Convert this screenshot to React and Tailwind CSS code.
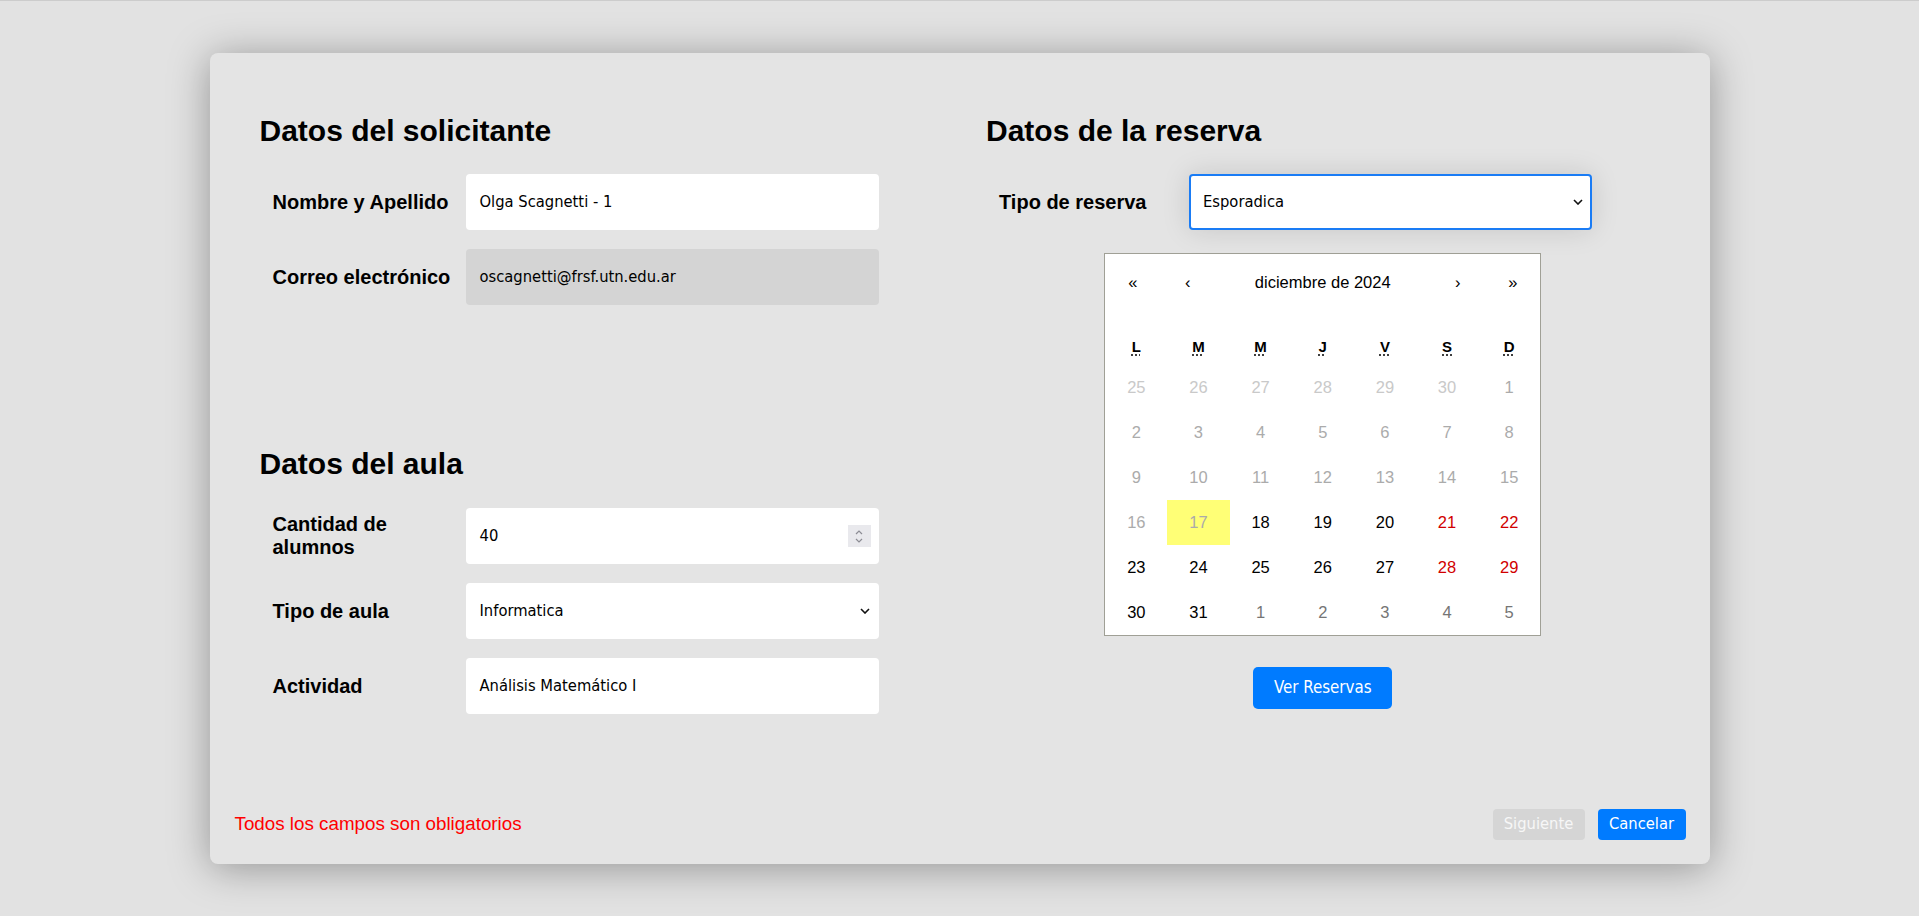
import React from "react";

const arial = "font-['Liberation_Sans',Arial,sans-serif]";
const tah = "font-['DejaVu_Sans_Condensed','DejaVu_Sans',sans-serif] font-stretch-condensed";

const colors = {
  prev: "text-[#c9c9c9]",
  past: "text-[#ababab]",
  today: "text-[#ababab] bg-[#ffff76]",
  cur: "text-black",
  wkd: "text-[#d10000]",
  next: "text-[#757575]",
};

const weeks = [
  [[25, "prev"], [26, "prev"], [27, "prev"], [28, "prev"], [29, "prev"], [30, "prev"], [1, "past"]],
  [[2, "past"], [3, "past"], [4, "past"], [5, "past"], [6, "past"], [7, "past"], [8, "past"]],
  [[9, "past"], [10, "past"], [11, "past"], [12, "past"], [13, "past"], [14, "past"], [15, "past"]],
  [[16, "past"], [17, "today"], [18, "cur"], [19, "cur"], [20, "cur"], [21, "wkd"], [22, "wkd"]],
  [[23, "cur"], [24, "cur"], [25, "cur"], [26, "cur"], [27, "cur"], [28, "wkd"], [29, "wkd"]],
  [[30, "cur"], [31, "cur"], [1, "next"], [2, "next"], [3, "next"], [4, "next"], [5, "next"]],
];

function Chevron() {
  return (
    <svg width="10" height="6" viewBox="0 0 10 6" fill="none">
      <path d="M1 1l4 4 4-4" stroke="#111" strokeWidth="1.6" />
    </svg>
  );
}

function Label({ children, w = "w-[193px]" }) {
  return (
    <div className={`${w} ml-[13px] shrink-0 text-[20px] leading-[23px] font-bold text-black pr-2`}>
      {children}
    </div>
  );
}

function Field({ label, children, lw }) {
  return (
    <div className="flex items-center">
      <Label w={lw}>{label}</Label>
      {children}
    </div>
  );
}

function TextBox({ value, disabled }) {
  return (
    <div
      className={`w-[413px] h-[56px] rounded-[4px] flex items-center pl-[14px] ${tah} text-[16.4px] text-black ${
        disabled ? "bg-[#d4d4d4]" : "bg-white"
      }`}
    >
      {value}
    </div>
  );
}

function Calendar() {
  return (
    <div className={`w-[437px] mx-auto mt-[23px] bg-white border border-[#a0a096] ${arial}`}>
      <div className="h-[56px] flex items-center text-[16.5px] text-black mb-[20px]">
        <button className="w-[55px] h-full text-center">«</button>
        <button className="w-[55px] h-full text-center">‹</button>
        <span className="flex-1 text-center">diciembre de 2024</span>
        <button className="w-[55px] h-full text-center">›</button>
        <button className="w-[55px] h-full text-center">»</button>
      </div>
      <div className="grid grid-cols-7 h-[35px] items-center text-[15px] font-bold text-black text-center">
        {["L", "M", "M", "J", "V", "S", "D"].map((d, i) => (
          <abbr key={i} className="underline decoration-dotted underline-offset-2">
            {d}
          </abbr>
        ))}
      </div>
      {weeks.map((w, i) => (
        <div key={i} className="grid grid-cols-7">
          {w.map(([n, t], j) => (
            <div key={j} className={`h-[45px] flex items-center justify-center text-[16.5px] ${colors[t]}`}>
              {n}
            </div>
          ))}
        </div>
      ))}
    </div>
  );
}

export default function App() {
  return (
    <div className={`min-h-screen w-full bg-[#e2e2e2] border-t border-[#cccccc] pt-[52px] ${arial}`}>
      <div className="mx-auto w-[1500px] h-[811px] bg-[#e4e4e4] rounded-[8px] shadow-[0_4px_40px_rgba(0,0,0,0.35)] flex flex-col">
        <div className="px-[50px] pt-[61px] grid grid-cols-2 gap-[53px]">
          {/* izquierda */}
          <div>
            <h2 className="text-[30px] leading-[34px] font-bold text-black">Datos del solicitante</h2>
            <div className="mt-[26px] flex flex-col gap-[19px]">
              <Field label="Nombre y Apellido">
                <TextBox value="Olga Scagnetti - 1" />
              </Field>
              <Field label="Correo electrónico">
                <TextBox value="oscagnetti@frsf.utn.edu.ar" disabled />
              </Field>
            </div>

            <h2 className="mt-[142px] text-[30px] leading-[34px] font-bold text-black">Datos del aula</h2>
            <div className="mt-[27px] flex flex-col gap-[19px]">
              <Field label="Cantidad de alumnos">
                <div className={`w-[413px] h-[56px] rounded-[4px] bg-white flex items-center pl-[14px] pr-[8px] ${tah} text-[16.4px] text-black`}>
                  <span className="flex-1">40</span>
                  <div className="w-[23px] h-[22px] bg-[#e9e9ed] flex flex-col items-center justify-center gap-[3px]">
                    <svg width="8" height="5" viewBox="0 0 8 5" fill="none">
                      <path d="M1 4l3-3 3 3" stroke="#8c8c94" strokeWidth="1.2" />
                    </svg>
                    <svg width="8" height="5" viewBox="0 0 8 5" fill="none">
                      <path d="M1 1l3 3 3-3" stroke="#8c8c94" strokeWidth="1.2" />
                    </svg>
                  </div>
                </div>
              </Field>
              <Field label="Tipo de aula">
                <div className={`w-[413px] h-[56px] rounded-[4px] bg-white flex items-center pl-[14px] pr-[9px] ${tah} text-[16.4px] text-black`}>
                  <span className="flex-1">Informatica</span>
                  <Chevron />
                </div>
              </Field>
              <Field label="Actividad">
                <TextBox value="Análisis Matemático I" />
              </Field>
            </div>
          </div>

          {/* derecha */}
          <div>
            <h2 className="text-[30px] leading-[34px] font-bold text-black">Datos de la reserva</h2>
            <div className="mt-[26px]">
              <Field label="Tipo de reserva" lw="w-[190px]">
                <div className={`w-[403px] h-[56px] rounded-[4px] bg-white border-2 border-[#1a7cf5] shadow-[0_0_28px_rgba(0,0,0,0.13)] flex items-center pl-[12px] pr-[7px] ${tah} text-[16.4px] text-black`}>
                  <span className="flex-1">Esporadica</span>
                  <Chevron />
                </div>
              </Field>
            </div>
            <Calendar />
            <div className="flex justify-center mt-[31px]">
              <button className={`w-[139px] h-[42px] rounded-[5px] bg-[#007bff] text-white text-[16.8px] ${tah}`}>
                Ver Reservas
              </button>
            </div>
          </div>
        </div>

        <div className="mt-auto flex items-center pl-[25px] pr-[24px] pb-[24px]">
          <span className="flex-1 text-[18.8px] text-[#ff0000]">Todos los campos son obligatorios</span>
          <div className={`flex gap-[13px] ${tah} text-[16.4px]`}>
            <button className="w-[92px] h-[31px] rounded-[4px] bg-[#d5d5d5] text-[#f7f7f7]">Siguiente</button>
            <button className="w-[88px] h-[31px] rounded-[4px] bg-[#007bff] text-white">Cancelar</button>
          </div>
        </div>
      </div>
    </div>
  );
}
